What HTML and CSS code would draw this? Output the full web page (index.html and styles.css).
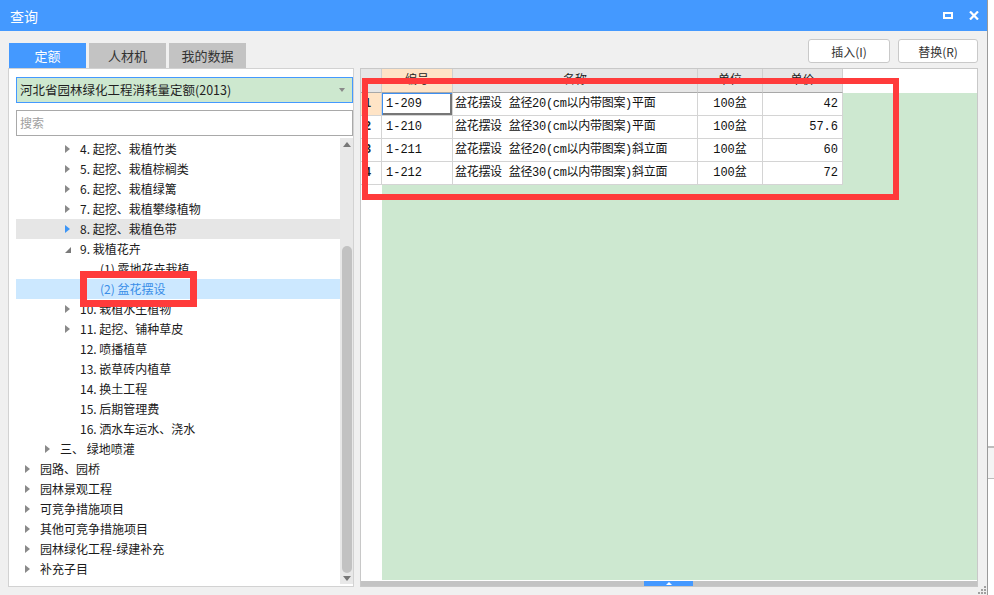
FILE: index.html
```html
<!DOCTYPE html>
<html lang="zh-CN">
<head>
<meta charset="utf-8">
<title>查询</title>
<link rel="stylesheet" href="styles.css">
</head>
<body>
<div class="window">
  <div class="titlebar">
    <span class="title">查询</span>
    <div class="win-ctrls">
      <span class="ico-max"></span>
      <svg class="ico-close" width="10" height="9" viewBox="0 0 10 9"><path d="M1 0.5 L9 8.5 M9 0.5 L1 8.5" stroke="#fff" stroke-width="2.2" fill="none"/></svg>
    </div>
  </div>
  <div class="toolbar">
    <div class="tabs">
      <div class="tab active">定额</div>
      <div class="tab">人材机</div>
      <div class="tab">我的数据</div>
    </div>
    <div class="actions">
      <button class="btn btn-insert">插入(I)</button>
      <button class="btn btn-replace">替换(R)</button>
    </div>
  </div>
  <div class="main">
    <div class="left-panel">
      <div class="select"><span>河北省园林绿化工程消耗量定额(2013)</span><span class="caret"></span></div>
      <div class="search">搜索</div>
      <div class="tree-wrap">
        <div class="tree">
          <div class="row l3"><span class="tw"><i class="arr"></i></span>4. 起挖、栽植竹类</div>
          <div class="row l3"><span class="tw"><i class="arr"></i></span>5. 起挖、栽植棕榈类</div>
          <div class="row l3"><span class="tw"><i class="arr"></i></span>6. 起挖、栽植绿篱</div>
          <div class="row l3"><span class="tw"><i class="arr"></i></span>7. 起挖、栽植攀缘植物</div>
          <div class="row l3 hover"><span class="tw"><i class="arr"></i></span>8. 起挖、栽植色带</div>
          <div class="row l3"><span class="tw"><i class="arr-open"></i></span>9. 栽植花卉</div>
          <div class="row l4"><span class="tw"></span>(1) 露地花卉栽植</div>
          <div class="row l4 selected"><span class="tw"></span>(2) 盆花摆设</div>
          <div class="row l3"><span class="tw"><i class="arr"></i></span>10. 栽植水生植物</div>
          <div class="row l3"><span class="tw"><i class="arr"></i></span>11. 起挖、铺种草皮</div>
          <div class="row l3"><span class="tw"></span>12. 喷播植草</div>
          <div class="row l3"><span class="tw"></span>13. 嵌草砖内植草</div>
          <div class="row l3"><span class="tw"></span>14. 换土工程</div>
          <div class="row l3"><span class="tw"></span>15. 后期管理费</div>
          <div class="row l3"><span class="tw"></span>16. 洒水车运水、浇水</div>
          <div class="row l2"><span class="tw"><i class="arr"></i></span>三、 绿地喷灌</div>
          <div class="row l1"><span class="tw"><i class="arr"></i></span>园路、园桥</div>
          <div class="row l1"><span class="tw"><i class="arr"></i></span>园林景观工程</div>
          <div class="row l1"><span class="tw"><i class="arr"></i></span>可竞争措施项目</div>
          <div class="row l1"><span class="tw"><i class="arr"></i></span>其他可竞争措施项目</div>
          <div class="row l1"><span class="tw"><i class="arr"></i></span>园林绿化工程-绿建补充</div>
          <div class="row l1"><span class="tw"><i class="arr"></i></span>补充子目</div>
        </div>
        <div class="vscroll">
          <span class="arr-up"></span>
          <div class="vtrack"><div class="vthumb"></div></div>
          <span class="arr-down"></span>
        </div>
      </div>
    </div>
    <div class="right-panel">
      <div class="sheet">
        <div class="sheet-head">
          <div class="hc rn"></div>
          <div class="hc c1 sel">编号</div>
          <div class="hc c2">名称</div>
          <div class="hc c3">单位</div>
          <div class="hc c4">单价</div>
          <div class="hfill"></div>
        </div>
        <div class="sheet-body">
          <div class="rn-col">
            <div class="rnc sel">1</div>
            <div class="rnc">2</div>
            <div class="rnc">3</div>
            <div class="rnc">4</div>
          </div>
          <div class="data">
            <div class="drow">
              <div class="cell c1 active">1-209</div>
              <div class="cell c2">盆花摆设 盆径20(cm以内带图案)平面</div>
              <div class="cell c3">100盆</div>
              <div class="cell c4">42</div>
            </div>
            <div class="drow">
              <div class="cell c1">1-210</div>
              <div class="cell c2">盆花摆设 盆径30(cm以内带图案)平面</div>
              <div class="cell c3">100盆</div>
              <div class="cell c4">57.6</div>
            </div>
            <div class="drow">
              <div class="cell c1">1-211</div>
              <div class="cell c2">盆花摆设 盆径20(cm以内带图案)斜立面</div>
              <div class="cell c3">100盆</div>
              <div class="cell c4">60</div>
            </div>
            <div class="drow">
              <div class="cell c1">1-212</div>
              <div class="cell c2">盆花摆设 盆径30(cm以内带图案)斜立面</div>
              <div class="cell c3">100盆</div>
              <div class="cell c4">72</div>
            </div>
          </div>
        </div>
      </div>
      <div class="gapline"></div>
      <div class="hscroll"><div class="hthumb"><span class="hthumb-arr"></span></div></div>
    </div>
  </div>
  <div class="grip">
    <i class="g g1"></i><i class="g g2"></i><i class="g g3"></i><i class="g g4"></i><i class="g g5"></i><i class="g g6"></i>
  </div>
</div>
<div class="behind"></div>
<div class="redbox box-table"></div>
<div class="redbox box-tree"></div>
</body>
</html>
```

FILE: styles.css
```css
* { box-sizing: border-box; }

html, body {
  margin: 0;
  padding: 0;
}

body {
  width: 994px;
  height: 595px;
  overflow: hidden;
  position: relative;
  background: #ffffff;
  font-family: "Noto Sans CJK SC", "Microsoft YaHei", sans-serif;
  font-size: 12px;
  color: #1f1f1f;
}

.window {
  width: 988px;
  height: 595px;
  background: #f0f0f0;
  border-right: 1px solid #9a9a9a;
  display: flex;
  flex-direction: column;
  position: relative;
}

/* title bar */
.titlebar {
  height: 31px;
  flex: none;
  background: #4499ff;
  color: #fff;
  display: flex;
  align-items: center;
  justify-content: space-between;
  padding: 0 8px 0 10px;
}
.title {
  font-size: 14px;
  line-height: 20px;
}
.win-ctrls {
  display: flex;
  align-items: center;
  gap: 16px;
}
.ico-max {
  display: block;
  width: 10px;
  height: 7px;
  border: 2px solid #fff;
  border-top-width: 2px;
}
.ico-close { display: block; }

/* toolbar */
.toolbar {
  height: 37px;
  flex: none;
  display: flex;
  justify-content: space-between;
  padding: 0 9px 0 9px;
}
.tabs {
  display: flex;
  gap: 3px;
  align-self: flex-end;
}
.tab {
  width: 77px;
  height: 25px;
  background: #c3c3c3;
  color: #333;
  font-size: 13px;
  line-height: 25px;
  text-align: center;
}
.tab.active {
  background: #4499ff;
  color: #fff;
}
.actions {
  display: flex;
  gap: 8px;
  margin-top: 8px;
  align-self: flex-start;
}
.btn {
  height: 24px;
  background: #fff;
  border: 1px solid #c9c9c9;
  border-radius: 3px;
  font-family: inherit;
  font-size: 12px;
  color: #333;
  padding: 0;
}
.btn-insert { width: 82px; }
.btn-replace { width: 80px; }

/* main area */
.main {
  flex: 1;
  min-height: 0;
  display: flex;
  gap: 6px;
  padding: 0 9px 8px 8px;
}

/* left panel */
.left-panel {
  width: 346px;
  flex: none;
  background: #fff;
  border: 1px solid #d2d2d2;
  padding: 8px 0 2px 7px;
  display: flex;
  flex-direction: column;
}
.select {
  height: 26px;
  flex: none;
  background: #cde8cf;
  border: 1px solid #4499ff;
  display: flex;
  align-items: center;
  justify-content: space-between;
  padding: 0 7px 0 3px;
  font-size: 12.5px;
  color: #1f1f1f;
  line-height: 20px;
}
.caret {
  width: 0;
  height: 0;
  border-top: 4px solid #8a8a8a;
  border-left: 3px solid transparent;
  border-right: 3px solid transparent;
}
.search {
  height: 26px;
  flex: none;
  margin-top: 7px;
  border: 1px solid #a9a9a9;
  color: #a0a0a0;
  font-size: 12px;
  line-height: 24px;
  padding-left: 3px;
}
.tree-wrap {
  flex: 1;
  min-height: 0;
  margin-top: 2px;
  display: flex;
}
.tree {
  flex: 1;
  padding-top: 1px;
  overflow: hidden;
}
.row {
  height: 20px;
  line-height: 20px;
  display: flex;
  align-items: center;
  white-space: nowrap;
  font-size: 12px;
  color: #1a1a1a;
}
.row.l1 { padding-left: 0; }
.row.l2 { padding-left: 20px; }
.row.l3 { padding-left: 40px; }
.row.l4 { padding-left: 60px; }
.row.hover { background: #e6e6e6; }
.row.selected {
  background: #cce8ff;
  color: #3a8ee8;
}
.tw {
  width: 24px;
  height: 20px;
  flex: none;
  display: flex;
  align-items: center;
  padding-left: 9px;
}
.arr {
  display: block;
  width: 0;
  height: 0;
  border-left: 5px solid #8a8a8a;
  border-top: 4px solid transparent;
  border-bottom: 4px solid transparent;
}
.row.hover .arr { border-left-color: #3d95f5; }
.arr-open {
  display: block;
  width: 0;
  height: 0;
  border-bottom: 6px solid #7a7a7a;
  border-left: 6px solid transparent;
  margin-top: 2px;
}

/* tree scrollbar */
.vscroll {
  width: 13px;
  flex: none;
  background: #e8e8e8;
  display: flex;
  flex-direction: column;
  align-items: center;
}
.arr-up {
  display: block;
  width: 0;
  height: 0;
  margin-top: 4px;
  border-bottom: 5px solid #777;
  border-left: 4px solid transparent;
  border-right: 4px solid transparent;
}
.vtrack {
  flex: 1;
  width: 100%;
  display: flex;
  justify-content: center;
}
.vthumb {
  width: 10px;
  height: 327px;
  margin-top: 99px;
  background: #c2c2c2;
  border-radius: 5px;
}
.arr-down {
  display: block;
  width: 0;
  height: 0;
  margin-bottom: 3px;
  border-top: 5px solid #777;
  border-left: 4px solid transparent;
  border-right: 4px solid transparent;
}

/* right panel */
.right-panel {
  flex: 1;
  min-width: 0;
  background: #fff;
  border: 1px solid #c8c8c8;
  display: flex;
  flex-direction: column;
}
.sheet {
  flex: 1;
  min-height: 0;
  display: flex;
  flex-direction: column;
}
.sheet-head {
  height: 24px;
  flex: none;
  display: flex;
}
.hc {
  height: 24px;
  background: #e6e6e6;
  border-right: 1px solid #d0d0d0;
  border-bottom: 1px solid #a8a8a8;
  font-size: 12px;
  line-height: 19px;
  text-align: center;
  color: #222;
}
.hc.sel { background: #ffe4c6; }
.hfill { flex: 1; background: #fff; }

.rn, .rn-col { width: 21px; flex: none; }
.c1 { width: 71px; flex: none; }
.c2 { width: 245px; flex: none; }
.c3 { width: 65px; flex: none; }
.c4 { width: 80px; flex: none; }

.sheet-body {
  flex: 1;
  min-height: 0;
  display: flex;
}
.rn-col { background: #fff; }
.rnc {
  height: 23px;
  border-right: 1px solid #d4d4d4;
  border-bottom: 1px solid #d4d4d4;
  font-family: "Liberation Mono", monospace;
  font-weight: bold;
  font-size: 12px;
  line-height: 22px;
  padding-left: 3px;
  color: #222;
}
.rnc.sel { background: #ffe4c6; }

.data {
  flex: 1;
  background: #cde8d0;
}
.drow {
  display: flex;
  height: 23px;
}
.cell {
  height: 23px;
  background: #fff;
  border-right: 1px solid #d4d4d4;
  border-bottom: 1px solid #d4d4d4;
  font-family: "Liberation Mono", "Noto Sans CJK SC", monospace;
  font-size: 12px;
  line-height: 22px;
  white-space: nowrap;
  overflow: hidden;
  color: #111;
}
.cell.c1 { padding-left: 4px; }
.cell.c2 { padding-left: 2px; letter-spacing: -0.3px; }
.cell.c3 { text-align: center; }
.cell.c4 { text-align: right; padding-right: 4px; }
.cell.active {
  box-shadow: inset 1px 1px 0 #3d8ef0, inset -2px -2px 0 #777;
}

.gapline { height: 1px; flex: none; background: #fff; }
.hscroll {
  height: 5px;
  flex: none;
  background: #c3c3c3;
  display: flex;
}
.hthumb {
  width: 49px;
  margin-left: 283px;
  background: #4499ff;
  display: flex;
  justify-content: center;
  align-items: center;
}
.hthumb-arr {
  display: block;
  width: 0;
  height: 0;
  border-bottom: 3px solid #fff;
  border-left: 3px solid transparent;
  border-right: 3px solid transparent;
}

/* resize grip */
.grip {
  position: absolute;
  right: 1px;
  bottom: 1px;
  width: 8px;
  height: 8px;
}
.g {
  position: absolute;
  width: 2px;
  height: 2px;
  background: #a0a0a0;
}
.g1 { right: 0; bottom: 0; }
.g2 { right: 3px; bottom: 0; }
.g3 { right: 6px; bottom: 0; }
.g4 { right: 0; bottom: 3px; }
.g5 { right: 3px; bottom: 3px; }
.g6 { right: 0; bottom: 6px; }

/* window behind, peeking at right edge */
.behind {
  position: absolute;
  left: 988px;
  top: 446px;
  width: 6px;
  height: 33px;
  background: #f4f4f4;
  border-top: 2px solid #bdbdbd;
  border-bottom: 1px solid #bdbdbd;
}

/* red annotation boxes */
.redbox {
  position: absolute;
  border: 6px solid #ff3b3b;
  pointer-events: none;
}
.box-table {
  left: 362px;
  top: 78px;
  width: 537px;
  height: 122px;
}
.box-tree {
  left: 80px;
  top: 271px;
  width: 117px;
  height: 36px;
  border-width: 7px;
}
```
